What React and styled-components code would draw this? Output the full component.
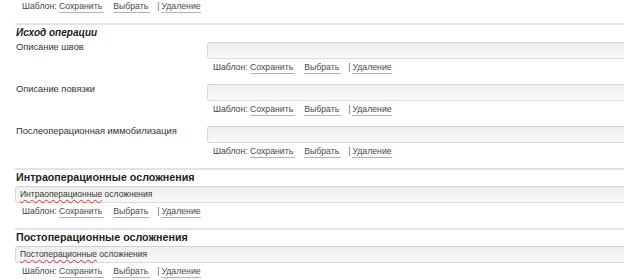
import React from 'react';
import styled, { createGlobalStyle } from 'styled-components';

const GlobalStyle = createGlobalStyle`
  html, body {
    margin: 0;
    padding: 0;
    background: #fff;
    overflow: hidden;
  }
  body {
    font-family: "Liberation Sans", Arial, sans-serif;
    color: #333;
  }
`;

const Page = styled.div`
  width: 640px;
  padding-left: 15px;
  box-sizing: border-box;
`;

const Section = styled.section`
  border-top: ${({ $first }) => ($first ? 'none' : '2px solid #e3e3e3')};
`;

const Heading = styled.h3`
  margin: ${({ $italic }) => ($italic ? '1px 0 2px 1px' : '0 0 2px 1px')};
  font-size: ${({ $italic }) => ($italic ? '10px' : '10.7px')};
  line-height: 14px;
  font-weight: bold;
  font-style: ${({ $italic }) => ($italic ? 'italic' : 'normal')};
  color: #222;
`;

const FieldRow = styled.div`
  display: grid;
  grid-template-columns: 192px 1fr;
  align-items: start;
`;

const Label = styled.label`
  font-size: 9.3px;
  line-height: 12px;
  margin-top: -1px;
  padding-left: 1px;
  color: #333;
`;

const Input = styled.div`
  height: 15px;
  border: 1px solid #dadada;
  border-top-color: #d2d2d2;
  border-radius: 3px;
  background: linear-gradient(#efefef, #f9f9f9);
  font-size: 8.5px;
  line-height: 15px;
  padding: 0 4px;
  color: #333;
  white-space: nowrap;
`;

const Misspelled = styled.span`
  text-decoration: underline wavy #e22;
  text-decoration-thickness: 1px;
  text-underline-offset: 2px;
`;

const TemplateBar = styled.div`
  display: flex;
  align-items: flex-start;
  height: 12px;
  font-size: 8.7px;
  line-height: 11px;
  padding: ${({ $top }) => $top ?? 3}px 0 10px ${({ $indent }) => $indent}px;
  color: #444;
`;

const TplLink = styled.a`
  color: #4a4a4a;
  text-decoration: none;
  border-bottom: 1px solid #b4b4b4;
  padding-right: ${({ $pad }) => $pad ?? 2}px;
  margin-left: ${({ $gap }) => $gap ?? 0}px;
  cursor: pointer;
`;

const Sep = styled.span`
  margin: 0 2px 0 7px;
  color: #666;
`;

const Template = ({ indent = 7, top }) => (
  <TemplateBar $indent={indent} $top={top}>
    <span>Шаблон:&nbsp;</span>
    <TplLink>Сохранить</TplLink>
    <TplLink $gap={9}>Выбрать</TplLink>
    <Sep>|</Sep>
    <TplLink $pad={0}>Удаление</TplLink>
  </TemplateBar>
);

const Field = ({ label }) => (
  <FieldRow>
    <Label>{label}</Label>
    <div>
      <Input />
      <Template indent={6} />
    </div>
  </FieldRow>
);

const App = () => (
  <>
    <GlobalStyle />
    <Page>
      <Section $first>
        <Template indent={7} top={1} />
      </Section>
      <Section>
        <Heading $italic>Исход операции</Heading>
        <Field label="Описание швов" />
        <Field label="Описание повязки" />
        <Field label="Послеоперационная иммобилизация" />
      </Section>
      <Section>
        <Heading>Интраоперационные осложнения</Heading>
        <Input>
          <Misspelled>Интраоперационные</Misspelled> осложнения
        </Input>
        <Template indent={7} />
      </Section>
      <Section>
        <Heading>Постоперационные осложнения</Heading>
        <Input>
          <Misspelled>Постоперационные</Misspelled> осложнения
        </Input>
        <Template indent={7} />
      </Section>
    </Page>
  </>
);

export default App;
